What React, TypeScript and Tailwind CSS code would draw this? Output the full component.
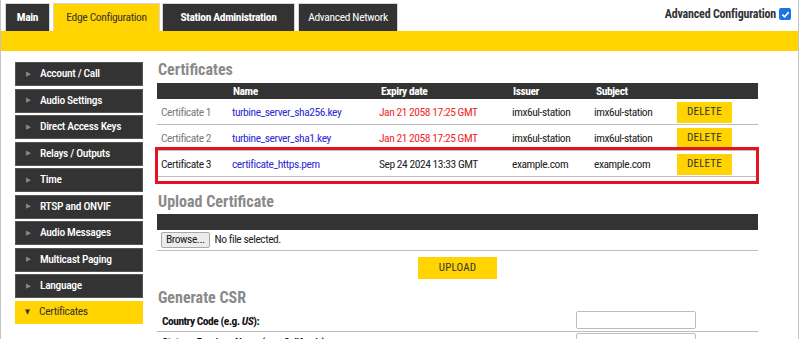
import { Fragment } from "react";

const font = "font-['Roboto_Condensed','Liberation_Sans_Narrow','DejaVu_Sans_Condensed',Roboto,sans-serif]";

const tabs = [
  { label: "Main", w: "w-[45px]", active: false, bold: true },
  { label: "Edge Configuration", w: "w-[107px]", active: true, bold: false },
  { label: "Station Administration", w: "w-[133px]", active: false, bold: true },
  { label: "Advanced Network", w: "w-[100px]", active: false, bold: false },
];

const menu = [
  "Account / Call",
  "Audio Settings",
  "Direct Access Keys",
  "Relays / Outputs",
  "Time",
  "RTSP and ONVIF",
  "Audio Messages",
  "Multicast Paging",
  "Language",
];

const certs = [
  {
    id: "Certificate 1",
    name: "turbine_server_sha256.key",
    expiry: "Jan 21 2058 17:25 GMT",
    expired: true,
    issuer: "imx6ul-station",
    subject: "imx6ul-station",
  },
  {
    id: "Certificate 2",
    name: "turbine_server_sha1.key",
    expiry: "Jan 21 2058 17:25 GMT",
    expired: true,
    issuer: "imx6ul-station",
    subject: "imx6ul-station",
  },
  {
    id: "Certificate 3",
    name: "certificate_https.pem",
    expiry: "Sep 24 2024 13:33 GMT",
    expired: false,
    issuer: "example.com",
    subject: "example.com",
  },
];

const cols = "grid grid-cols-[75px_147px_133px_82px_83px_1fr]";

export default function App() {
  return (
    <div className={`${font} w-[799px] h-[339px] overflow-hidden bg-white border-x border-[#c4c4c4] text-[11.5px] tracking-[-0.45px] text-[#222]`}>
      {/* Top tabs */}
      <div className="flex items-end h-[31px] pl-[4px] pr-[7px]">
        {tabs.map((t, i) => (
          <div
            key={t.label}
            className={`${t.w} h-[28px] flex items-center justify-center border border-[#d6d6d6] border-b-0 ${
              i === 1 ? "ml-[3px]" : i === 2 ? "ml-[2px]" : i === 3 ? "ml-[3px]" : ""
            } ${t.active ? "bg-[#ffd400] text-[#333]" : "bg-[#333] text-white"} ${
              t.bold ? "font-bold" : ""
            } text-[11.5px] tracking-[-0.35px]`}
          >
            {t.label}
          </div>
        ))}
        <div className="ml-auto self-start mt-[5px] flex items-center gap-[3px] font-bold text-[#333] text-[12px] tracking-[-0.2px]">
          Advanced Configuration
          <span className="w-[12px] h-[12px] rounded-[2px] bg-[#1a73e8] flex items-center justify-center">
            <svg width="9" height="9" viewBox="0 0 10 10">
              <path d="M1.5 5.2 L4 7.6 L8.6 2.4" fill="none" stroke="white" strokeWidth="1.8" />
            </svg>
          </span>
        </div>
      </div>
      <div className="h-[20px] bg-[#ffd400]" />

      <div className="flex">
        {/* Sidebar */}
        <div className="ml-[14px] mt-[11px] w-[128px] flex flex-col gap-[2.5px]">
          {menu.map((m) => (
            <div key={m} className="h-[24px] bg-[#333] border border-[#555] flex items-center text-white font-medium text-[11.5px] tracking-[-0.35px]">
              <span className="w-[24px] pl-[10px] text-[#888] text-[7px]">▶</span>
              {m}
            </div>
          ))}
          <div className="h-[23px] bg-[#ffd400] flex items-center text-[#333] text-[11.5px] tracking-[-0.35px]">
            <span className="w-[24px] pl-[10px] text-[#333] text-[7px]">▼</span>
            Certificates
          </div>
        </div>

        {/* Main content */}
        <div className="ml-[14px] w-[601px] pt-[9px] relative">
          <h2 className="text-[16px] leading-[19px] font-bold text-[#8a8a8a] pl-[1px] tracking-normal">Certificates</h2>
          <div className={`${cols} mt-[4px] h-[16px] items-center bg-[#333] text-white font-bold`}>
            <span />
            <span className="pl-[1px]">Name</span>
            <span className="pl-[2px]">Expiry date</span>
            <span className="pl-[1px]">Issuer</span>
            <span className="pl-[2px]">Subject</span>
            <span />
          </div>
          {certs.map((c, i) => (
            <div key={c.id} className={`${cols} h-[26px] pt-[2px] border-b border-[#bdbdbd] items-center`}>
              <span className={`pl-[4px] ${i === 2 ? "text-[#222]" : "text-[#7a7a7a]"}`}>{c.id}</span>
              <span className="text-[#2a2ad6]">{c.name}</span>
              <span className={c.expired ? "text-[#f02828]" : "text-[#222]"}>{c.expiry}</span>
              <span>{c.issuer}</span>
              <span>{c.subject}</span>
              <div>
                <button className="w-[55px] h-[21px] bg-[#ffd400] text-[#333] text-[11px] tracking-[0.2px]">DELETE</button>
              </div>
            </div>
          ))}

          {/* highlight annotation */}
          <div className="absolute left-[-2px] top-[96px] w-[604px] h-[37px] border-[3px] border-[#e3131f] pointer-events-none" />

          <h2 className="mt-[15px] text-[16px] leading-[19px] font-bold text-[#8a8a8a] pl-[1px] tracking-normal">Upload Certificate</h2>
          <div className="mt-[3px] h-[16px] bg-[#333]" />
          <div className="h-[21px] border-b border-[#bdbdbd] flex items-center pl-[4px] gap-[5px]">
            <span className="h-[16px] px-[4px] border border-[#a9a9a9] rounded-[2px] bg-[#ececec] flex items-center text-[#222]">
              Browse...
            </span>
            <span>No file selected.</span>
          </div>
          <div className="flex justify-center pt-[6px]">
            <button className="w-[79px] h-[22px] bg-[#ffd400] text-[#333] text-[11px] tracking-[0.2px]">UPLOAD</button>
          </div>

          <h2 className="mt-[9px] text-[16px] leading-[19px] font-bold text-[#8a8a8a] pl-[1px] tracking-normal">Generate CSR</h2>
          <div className="h-[25px] border-b border-[#bdbdbd] pt-[6px] pl-[5px] relative">
            <span className="font-bold text-[#111] tracking-[-0.5px] leading-[14px]">
              Country Code (e.g. <i>US</i>):
            </span>
            <span className="absolute left-[419px] top-[4px] w-[120px] h-[18px] border border-[#bcbcbc] rounded-[2px] bg-white" />
          </div>
          <div className="h-[25px] border-b border-[#bdbdbd] pt-[2px] pl-[5px] relative">
            <span className="font-bold text-[#111] tracking-[-0.5px] leading-[14px]">
              <Fragment>State or Province Name (e.g. <i>California</i>):</Fragment>
            </span>
            <span className="absolute left-[419px] top-[1px] w-[120px] h-[18px] border border-[#bcbcbc] rounded-[2px] bg-white" />
          </div>
        </div>
      </div>
    </div>
  );
}
